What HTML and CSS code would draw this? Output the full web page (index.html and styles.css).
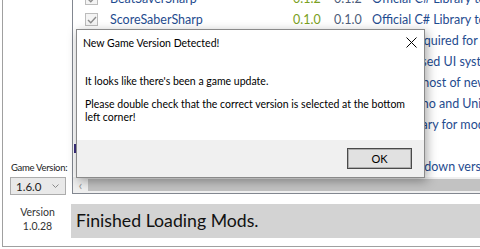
FILE: index.html
```html
<!DOCTYPE html>
<html lang="en">
<head>
  <meta charset="UTF-8" />
  <meta name="viewport" content="width=device-width, initial-scale=1.0"/>
  <title>Mod Assistant</title>
  <link rel="stylesheet" href="styles.css">
</head>
<body>

  <div class="window">
    <aside class="side">
      <label class="gv-label" for="gameVersion">Game Version:</label>
      <div class="select" id="gameVersion">
        <span>1.6.0</span>
        <svg class="chev" width="7" height="4" viewBox="0 0 7 4"><polyline points="0.5,0.5 3.5,3.5 6.5,0.5" fill="none" stroke="#8a8a8a" stroke-width="1"/></svg>
      </div>
    </aside>

    <section class="mods">
      <div class="rows">
        <div class="row">
          <span class="check"><svg width="10" height="8" viewBox="0 0 10 8"><polyline points="1,4 3.8,6.8 9,1" fill="none" stroke="#8c8c8c" stroke-width="1.4"/></svg></span>
          <span class="name">BeatSaverSharp</span>
          <span class="installed">0.1.2</span>
          <span class="latest">0.1.2</span>
          <span class="desc">Official C# Library to interact with BeatSaver</span>
        </div>
        <div class="row">
          <span class="check"><svg width="10" height="8" viewBox="0 0 10 8"><polyline points="1,4 3.8,6.8 9,1" fill="none" stroke="#8c8c8c" stroke-width="1.4"/></svg></span>
          <span class="name">ScoreSaberSharp</span>
          <span class="installed">0.1.0</span>
          <span class="latest">0.1.0</span>
          <span class="desc">Official C# Library to interact with ScoreSaber</span>
        </div>
        <div class="row">
          <span class="check"></span>
          <span class="name">BS Utils</span>
          <span class="installed"></span>
          <span class="latest">1.4.0</span>
          <span class="desc">Library required for custom songs and more</span>
        </div>
        <div class="row">
          <span class="check"></span>
          <span class="name">BeatSaberMarkupLanguage</span>
          <span class="installed"></span>
          <span class="latest">1.3.4</span>
          <span class="desc">A text based UI system for mods</span>
        </div>
        <div class="row">
          <span class="check"></span>
          <span class="name">SongCore</span>
          <span class="installed"></span>
          <span class="latest">2.9.0</span>
          <span class="desc">Provides host of new features</span>
        </div>
        <div class="row">
          <span class="check"></span>
          <span class="name">Harmony</span>
          <span class="installed"></span>
          <span class="latest">2.0.2</span>
          <span class="desc">Fixes Mono and Unity</span>
        </div>
        <div class="row">
          <span class="check"></span>
          <span class="name">CustomJSONData</span>
          <span class="installed"></span>
          <span class="latest">1.1.0</span>
          <span class="desc">Code library for mods</span>
        </div>
        <div class="row current">
          <span class="check"></span>
          <span class="name">Ini Parser</span>
          <span class="installed"></span>
          <span class="latest">2.5.7</span>
          <span class="desc">Ini files</span>
        </div>
        <div class="row">
          <span class="check"></span>
          <span class="name">SongDataCore</span>
          <span class="installed"></span>
          <span class="latest">1.3.2</span>
          <span class="desc">Supports down versions of songs</span>
        </div>
      </div>
      <div class="hscroll">
        <span class="arrow">&lsaquo;</span>
        <div class="thumb"></div>
      </div>
    </section>

    <div class="version">Version<br>1.0.28</div>
    <div class="status">Finished Loading Mods.</div>
  </div>

  <div class="dialog">
    <div class="dialog-title">
      <span>New Game Version Detected!</span>
      <svg class="close" width="11" height="11" viewBox="0 0 11 11"><path d="M0.5 0.5 L10.5 10.5 M10.5 0.5 L0.5 10.5" stroke="#000" stroke-width="1"/></svg>
    </div>
    <div class="dialog-body">
      <p>It looks like there's been a game update.</p>
      <p>Please double check that the correct version is selected at the bottom left corner!</p>
    </div>
    <div class="dialog-footer">
      <button class="ok-btn">OK</button>
    </div>
  </div>

</body>
</html>
```

FILE: styles.css
```css
:root {
  --frame: #a0a0a0;
  --list-border: #828790;
  --status-bg: #d3d3d3;
  --dialog-bg: #f0f0f0;
  --name: #1f4c8f;
  --installed: #7aa022;
  --latest: #4e5d7a;
}

body {
  margin: 0;
  width: 480px;
  height: 249px;
  overflow: hidden;
  background: #fff;
  font-family: Lato, 'Noto Sans', sans-serif;
  font-size: 12px;
  color: #000;
  position: relative;
}

.window {
  display: grid;
  grid-template-columns: 69px 1fr;
  grid-template-rows: 194px 10px 34px 1fr;
  margin-left: 2px;
  height: 246px;
  border-left: 1px solid var(--frame);
  border-bottom: 1px solid var(--frame);
}

/* left column */
.side {
  grid-column: 1;
  grid-row: 1;
  display: flex;
  flex-direction: column;
  justify-content: flex-end;
  padding-left: 7px;
}

.gv-label {
  font-size: 9.5px;
  letter-spacing: -0.3px;
  color: #222;
  white-space: nowrap;
  margin-bottom: 4px;
  padding-left: 1px;
}

.select {
  display: flex;
  align-items: center;
  justify-content: space-between;
  width: 56px;
  height: 18px;
  padding: 0 6px 0 5px;
  box-sizing: border-box;
  margin-bottom: -1px;
  background: #e9e9e9;
  border: 1px solid #acacac;
  font-size: 11.5px;
  font-weight: 400;
  color: #222;
}

/* mod list */
.mods {
  grid-column: 2;
  grid-row: 1;
  display: flex;
  flex-direction: column;
  border-left: 1px solid var(--list-border);
  border-bottom: 1px solid var(--list-border);
  overflow: hidden;
}

.rows {
  flex: 1;
  margin-top: -12px;
}

.row {
  display: grid;
  grid-template-columns: 37px 183px 41px 38px 1fr;
  align-items: center;
  height: 21px;
  white-space: nowrap;
  font-size: 12.5px;
}

.row.current {
  background: linear-gradient(#3b2f7e, #3b2f7e) no-repeat 1px 9px / 2px 9px;
}

.check {
  justify-self: center;
  width: 11px;
  height: 11px;
  border: 1px solid #bcbcbc;
  background: #f4f4f4;
  display: flex;
  align-items: center;
  justify-content: center;
}

.name,
.desc {
  color: var(--name);
}

.installed {
  color: var(--installed);
}

.latest {
  color: var(--latest);
}

.hscroll {
  display: flex;
  align-items: stretch;
  height: 16px;
  background: #f0f0f0;
}

.arrow {
  width: 15px;
  text-align: center;
  color: #9a9a9a;
  font-size: 14px;
  line-height: 15px;
}

.thumb {
  flex: 1;
  margin: 2px 0;
  background: #c2c2c2;
}

/* bottom */
.version {
  grid-column: 1;
  grid-row: 3;
  text-align: center;
  font-size: 10.5px;
  line-height: 14px;
  color: #333;
  padding-top: 1px;
}

.status {
  grid-column: 2;
  grid-row: 3;
  margin-left: -1px;
  background: var(--status-bg);
  font-size: 17.7px;
  line-height: 34px;
  padding-left: 5px;
  color: #111;
}

/* message box */
.dialog {
  position: absolute;
  left: 76px;
  top: 29px;
  width: 347px;
  height: 147px;
  border: 1px solid #8a8a8a;
  background: #fff;
  box-shadow: 2px 3px 10px rgba(0, 0, 0, 0.35);
  display: flex;
  flex-direction: column;
  font-size: 10.5px;
}

.dialog-title {
  display: flex;
  justify-content: space-between;
  align-items: center;
  height: 25px;
  padding: 0 7px 0 6px;
}

.dialog-body {
  flex: 1;
  padding: 20px 8px 0 8px;
}

.dialog-body p {
  margin: 0 0 10px;
  line-height: 13px;
}

.dialog-footer {
  display: flex;
  justify-content: flex-end;
  align-items: flex-start;
  height: 37px;
  padding: 8px 12px 0 0;
  box-sizing: border-box;
  background: var(--dialog-bg);
}

.ok-btn {
  width: 65px;
  height: 21px;
  font-family: inherit;
  font-size: 11px;
  color: #000;
  background: #e1e1e1;
  border: 1px solid #4a4a4a;
  box-shadow: inset 0 0 0 1px #adadad;
  padding: 0;
}
```
